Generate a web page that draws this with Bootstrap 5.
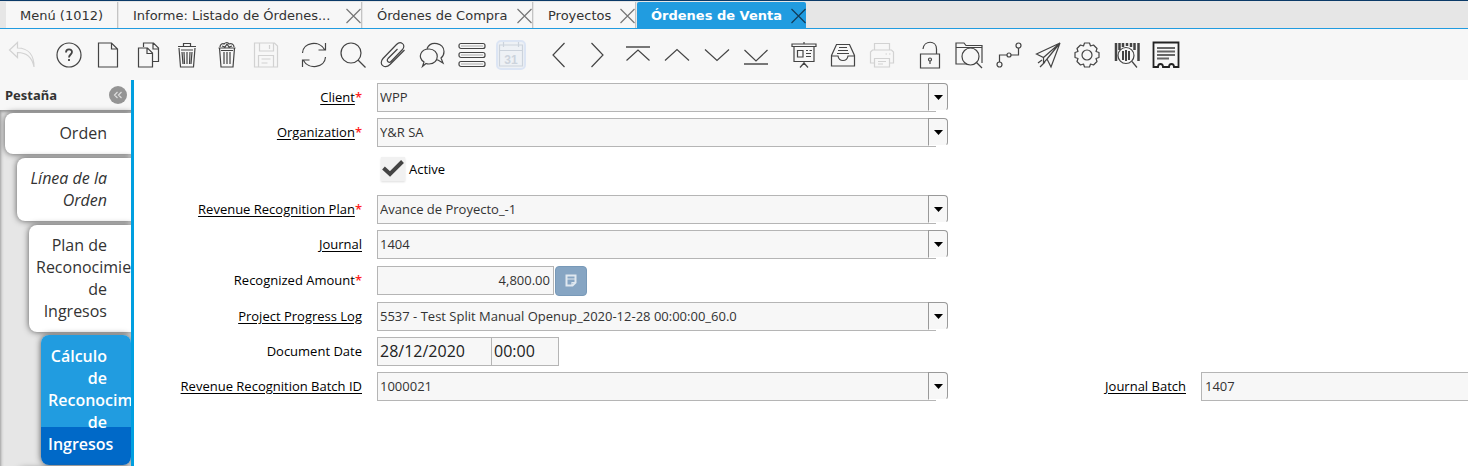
<!DOCTYPE html>
<html lang="es">
<head>
<meta charset="utf-8">
<meta name="viewport" content="width=device-width, initial-scale=1">
<title>Órdenes de Venta</title>
<link href="https://cdn.jsdelivr.net/npm/bootstrap@5.3.0/dist/css/bootstrap.min.css" rel="stylesheet">
<style>
  :root { --brand: #219ce0; --line: #009fe0; --panel: #f7f7f7; --edge: #b5b5b5; }
  body { font: 13px/20px "Open Sans", "Noto Sans", sans-serif; color: #000; background: #fff; }
  .app { border-top: 1px solid #0b3a68; overflow: hidden; }

  /* window tabs */
  .tabstrip { height: 28px; padding-left: 6px; background: #e6e6e6; border-bottom: 1px solid var(--brand); font-family: "DejaVu Sans", sans-serif; }
  .wtab { background: var(--panel); color: #333; padding: 2px 0 0 14px; border-right: 1px solid #c4c4c4; margin-right: 1px; height: 26px; margin-top: 1px; }
  .wtab a { color: inherit; text-decoration: none; white-space: nowrap; }
  .wtab button { color: #777; line-height: 0; }
  .wtab.on { background: var(--brand); color: #fff; font-weight: 700; border: 0; border-radius: 2px 2px 0 0; }
  .wtab.on button { color: #123c58; }
  .w-menu { width: 112px; } .w-inf { width: 243px; } .w-buy { width: 170px; } .w-pro { width: 102px; } .w-sale { width: 169px; }

  /* toolbar */
  .tools { height: 51px; padding-left: 3px; gap: 8px; background: var(--panel); }
  .tools > div { display: flex; flex: none; }
  .tools button { flex: 1 1 0; padding: 0; border: 0; background: none; line-height: 0; color: #444; }
  .tools button:disabled { color: #d2d2d2; }
  .tools svg { stroke-width: 1.2; }
  .g1 { width: 38px; } .g3 { width: 118px; } .g6 { width: 237px; } .g7 { width: 276px; }
  svg { fill: none; stroke: currentColor; stroke-width: 1.2; }

  /* tab tree */
  .side { width: 134px; height: calc(100vh - 80px); flex: none; overflow: hidden; border-right: 3px solid var(--line); background: #e6e6e6; }
  .side-head { height: 30px; padding: 0 4px 0 5px; background: var(--panel); font: bold 13px/20px "Noto Sans", sans-serif; color: #333; }
  .side-head button { width: 18px; height: 18px; border: 0; padding: 0; border-radius: 50%; background: #949494; color: #ddd; line-height: 0; }
  .tree { padding-top: 3px; gap: 4px; box-shadow: inset 1px 2px 3px #999; height: 100%; font-size: 16px; line-height: 22px; text-align: right; }
  .node { flex: none; background: #fff; color: #333; text-decoration: none; border-radius: 8px 0 0 8px; box-shadow: 0 0 6px #555; padding: 9px 24px 10px 7px; }
  .l1 { margin-left: 5px; } .l2 { margin-left: 17px; } .l3 { margin-left: 29px; } .l4 { margin-left: 41px; } 
  .node.now { margin-top: -1px; padding: 10px 24px 10px 7px; color: #fff; font-weight: 600; background: linear-gradient(var(--brand) 92px, #0069c8 92px); border-radius: 8px; }

  /* form */
  .fields { display: grid; flex: 1; min-width: 0; grid-template-columns: 228fr 571fr 223fr 267fr; column-gap: 15px; row-gap: 6px; padding-top: 3px; align-content: start; align-items: center; overflow: hidden; }
  .fields > * { min-width: 0; }
  .cap { grid-column: 1; text-align: right; white-space: nowrap; padding-bottom: 2px; }
  .cap.second { grid-column: 3; }
  .cap a { color: #000; text-decoration: underline; text-underline-offset: 2px; }
  .cap i { color: #f22; font-style: normal; font-weight: 600; }
  .fld { height: 29px; border: 1px solid var(--edge); border-radius: 0; background: var(--panel); color: #333; padding: 0 3px 2px; appearance: none; outline: 0; }
  .combo .fld { flex: 1 1 0; min-width: 0; padding-left: 2px; }
  .drop { width: 20px; height: 28px; margin-left: -8px; background: var(--panel); border: 1px solid #999; border-bottom: 1px solid #fff; border-radius: 0 4px 4px 0; flex: none; line-height: 0; padding: 0; color: #000; }
  .amount { height: 31px; gap: 1px; }
  .amount .fld { width: 177px; }
  .calc { width: 32px; height: 30px; border: 1px solid #7899b8; border-radius: 4px; background: #86a5c3; color: #dfe8f0; padding: 0; line-height: 0; }
  .when .fld { font-size: 16px; color: #222; padding-left: 2px; }
  .day { width: 115px; } .hour { width: 68px; margin-left: -1px; }
  .flag { height: 36px; grid-column: 2; padding: 4px 0 0 4px; }
  .flag input { appearance: none; width: 24px; height: 24px; margin: 0; background: #f1f1f1; box-shadow: 0 1px 2px #ddd; }
  .flag input:checked { background: #f1f1f1 url("data:image/svg+xml,%3Csvg xmlns='http://www.w3.org/2000/svg' viewBox='0 0 24 24'%3E%3Cpath d='M2.5 11l6.500 6L21.500 4.500' fill='none' stroke='%23444' stroke-width='4'/%3E%3C/svg%3E"); }
</style>
</head>
<body>
<div class="app">
  <nav class="tabstrip d-flex">
    <div class="wtab w-menu d-flex align-items-center"><a href="#">Menú (1012)</a></div>
    <div class="wtab w-inf d-flex align-items-center justify-content-between"><a href="#">Informe: Listado de Órdenes...</a><button class="border-0 p-0 bg-transparent" aria-label="Cerrar"><svg width="15" height="16"><path d="M.5 1l14 14M14.500 1L.5 15"/></svg></button></div>
    <div class="wtab w-buy d-flex align-items-center justify-content-between"><a href="#">Órdenes de Compra</a><button class="border-0 p-0 bg-transparent" aria-label="Cerrar"><svg width="15" height="16"><path d="M.5 1l14 14M14.500 1L.5 15"/></svg></button></div>
    <div class="wtab w-pro d-flex align-items-center justify-content-between"><a href="#">Proyectos</a><button class="border-0 p-0 bg-transparent" aria-label="Cerrar"><svg width="15" height="16"><path d="M.5 1l14 14M14.500 1L.5 15"/></svg></button></div>
    <div class="wtab w-sale on d-flex align-items-center justify-content-between"><a href="#">Órdenes de Venta</a><button class="border-0 p-0 bg-transparent" aria-label="Cerrar"><svg width="15" height="16"><path d="M.5 1l14 14M14.500 1L.5 15"/></svg></button></div>
  </nav>

  <div class="tools d-flex align-items-center">
    <div class="g1">
      <button disabled aria-label="Deshacer"><svg width="28" height="28"><path d="M9.500 1.500L1.500 9l8 7.500v-5c8 0 14.500 4 16.500 14.500 0-11-5-19-16.500-19z"/></svg></button>
    </div>
    <div class="g6">
      <button aria-label="Ayuda"><svg width="28" height="28"><circle cx="14" cy="14" r="12"/><path d="M11 11.500c0-4 6-4 6-.5 0 2.500-3 2.500-3 5.500M14 18v2" stroke-width="1.800"/></svg></button>
      <button aria-label="Nuevo"><svg width="28" height="28"><path d="M4.500 2h13l6 6v18h-19zM17.500 2v6h6"/></svg></button>
      <button aria-label="Copiar"><svg width="28" height="28"><path d="M9.500 6V2h10l5 5v13.500h-6M19 2v6h5.500M4.500 7h9l5 5v14h-14zM13 7v5.500h5.500"/></svg></button>
      <button aria-label="Borrar"><svg width="28" height="28"><path d="M5 5.500h18M6 7l1.500 19h13L22 7M10.500 5.500V2.500h7V5.500M8 9h12M11 11l.5 12M14 11v12M17 11l-.5 12M9 11l1 12M19 11l-1 12"/></svg></button>
      <button aria-label="Borrar selección"><svg width="28" height="28"><path d="M6.500 7l1.500 19h12L21.500 7M5.500 7h17M7 6c0-3 3-4 4-3 2-2 4-2 5 0 2-1 5 0 5 3M9 5l3 1 2-3 2 3 3-1M8 9.500h12M11 11v12M14 11v12M17 11v12"/></svg></button>
      <button disabled aria-label="Guardar"><svg width="28" height="28"><path d="M2.500 2h20l3 3v21h-23zM7.500 2v8h14V2M17.500 4v4M6.500 26V14.500h15V26M9.500 18h9M9.500 22h6"/></svg></button>
    </div>
    <div class="g6">
      <button aria-label="Refrescar"><svg width="28" height="28"><path d="M2.500 12C3 1 19.500-1 24.500 8.500M25.500 2v7h-7M25.500 16C25 27 8.500 29 3.500 19.500M2.500 26v-7h7"/></svg></button>
      <button aria-label="Buscar"><svg width="28" height="28"><circle cx="12" cy="12" r="10"/><path d="M19 19l7.500 7.500"/></svg></button>
      <button aria-label="Adjuntos"><svg width="28" height="28"><path d="M18.500 8L9 17.500c-2 2.500 1 5 3 3L23.500 8.500c4-5-2-9-6-5L4 17.500c-5 6 2 11 7 6L25.500 9"/></svg></button>
      <button aria-label="Chat"><svg width="28" height="28"><path d="M9 7.500C13-1 26 2 26 10.500c0 3-1 5-3 6.500l2 5-5-3h-2M4.500 25.500l1.500-4.500c-7-5-3-13 5-13 11 0 11 15 0 15-1 0-2 0-3-.5z"/></svg></button>
      <button aria-label="Lista"><svg width="28" height="28"><rect x="1" y="2.500" width="26" height="5" rx="2"/><rect x="1" y="11.500" width="26" height="5" rx="2"/><rect x="1" y="20.500" width="26" height="5" rx="2"/><path d="M3 5h22M3 14h22M3 23h22" stroke="#aaa"/></svg></button>
      <button disabled aria-label="Calendario"><svg width="30" height="30"><rect x="1" y="1" width="28" height="28" rx="4" fill="#eef1f5" stroke="#dce5f4" stroke-width="2"/><path d="M3.500 5h23v21h-23zM3.500 10.500h23M7.500 2v5M22.500 2v5" stroke="#ccd3dc"/><text x="15" y="24" text-anchor="middle" font-family="Liberation Sans" font-size="12" font-weight="bold" fill="#ccd3dc" stroke="none">31</text></svg></button>
    </div>
    <div class="g6">
      <button aria-label="Anterior"><svg width="28" height="28"><path d="M19.500 2L8 14l11.500 12"/></svg></button>
      <button aria-label="Siguiente"><svg width="28" height="28"><path d="M7.500 2L19 14 7.500 26"/></svg></button>
      <button aria-label="Primero"><svg width="28" height="28"><path d="M2 6h24" stroke-width="2" stroke="#777"/><path d="M2.500 19.500L14 9l11.500 10.500"/></svg></button>
      <button aria-label="Arriba"><svg width="28" height="28"><path d="M2 19.500L14 8.500l12 11"/></svg></button>
      <button aria-label="Abajo"><svg width="28" height="28"><path d="M2 8.500l12 11 12-11"/></svg></button>
      <button aria-label="Último"><svg width="28" height="28"><path d="M2 23h24" stroke-width="2" stroke="#777"/><path d="M2.500 9L14 20 25.500 9"/></svg></button>
    </div>
    <div class="g3">
      <button aria-label="Informe"><svg width="28" height="28"><path d="M2 3h24v2.500H2zM4 6v14.500h20V6M14 1v2M14 20.500V23M10 26.500l4-4.500 4 4.500M7.500 9.500h5.500v6.500H7.500zM16 9.500h2M19.500 9.500H22M16 12.500h5M16 15.500h5"/></svg></button>
      <button aria-label="Archivo"><svg width="28" height="28"><path d="M2.500 14.500l5-11h13l5 11v10.500h-23zM2.500 15H9c1 6 9 6 10 0h6.500M10 6.500h8M9 9.500h10M8 12.500h12"/></svg></button>
      <button disabled aria-label="Imprimir"><svg width="28" height="28"><path d="M6.500 9V2.500h15V9M6.500 22h-4V11l2-2h19l2 2v11h-4M6.500 17.500h15V26h-15zM17.500 13h1.500M21 13h1.500M10 20.500h8M10 23h5"/></svg></button>
    </div>
    <div class="g7">
      <button aria-label="Bloquear"><svg width="28" height="28"><path d="M4.500 13h19v14h-19zM7 8C8-1 20.500-1 20.500 8v5"/><circle cx="14" cy="18.500" r="1.500"/><path d="M14 20v3"/></svg></button>
      <button aria-label="Zoom"><svg width="30" height="28"><path d="M13 23H2V2h8l2 2.500h16V22M2 6.500h26"/><circle cx="16.500" cy="15.500" r="8.500"/><path d="M22 21l6 6"/></svg></button>
      <button aria-label="Flujo de trabajo"><svg width="28" height="28"><circle cx="4.500" cy="23.500" r="2.500"/><circle cx="14" cy="14" r="2"/><circle cx="23.500" cy="4.500" r="2.500"/><path d="M4.500 21v-7H12M16 14h7.500V7"/></svg></button>
      <button aria-label="Enviar"><svg width="28" height="28"><path d="M26 2L2.500 13l7 3.500zM26 2L9.500 16.500v5.500l3.500-4 4 8zM26 2L13 18M4 22l4-3M6 26l5-5"/></svg></button>
      <button aria-label="Proceso"><svg width="28" height="28"><circle cx="14" cy="14" r="5"/><path d="M11.500 2h5l1 3 3-1 3.500 3.500-1 3 3 1v5l-3 1 1 3-3.500 3.500-3-1-1 3h-5l-1-3-3 1L4 20.500l1-3-3-1v-5l3-1-1-3L7.500 4l3 1z" stroke-linejoin="round"/></svg></button>
      <button aria-label="Producto"><svg width="28" height="28"><path d="M3 2v18M6.500 2v7M10 2v4M14 2v3M18 2v4M21.500 2v7M25.500 2v18" stroke-width="2.500"/><circle cx="13" cy="14.500" r="8"/><path d="M19 20.500l5 6"/><path d="M10 10v9M13 9v11M16 10v9" stroke-width="2"/></svg></button>
      <button aria-label="Recibo"><svg width="28" height="28"><path d="M1.500 1.500h25V26H22c0-4-5-4-5 0h-6c0-4-5-4-5 0H1.500z" stroke="#222" stroke-width="1.800"/><path d="M5 7h18M5 10.500h18M5 14h18M5 17.500h12" stroke="#666" stroke-width="2"/></svg></button>
    </div>
  </div>

  <div class="d-flex">
    <aside class="side">
      <div class="side-head d-flex align-items-center justify-content-between">Pestaña
        <button aria-label="Contraer"><svg width="10" height="8"><path d="M4.500 1l-3 3 3 3M8.500 1l-3 3 3 3"/></svg></button>
      </div>
      <nav class="tree d-flex flex-column">
        <a class="node l1" href="#">Orden</a>
        <a class="node l2 fst-italic" href="#">Línea de la Orden</a>
        <a class="node l3" href="#">Plan de Reconocimiento de Ingresos</a>
        <a class="node l4 now" href="#">Cálculo de Reconocimiento de Ingresos</a>
        <a class="node l2" href="#" aria-label="Siguiente pestaña"></a>
      </nav>
    </aside>

    <form class="fields">
      <label class="cap" for="client"><a href="#">Client</a><i>*</i></label>
      <div class="combo d-flex"><select class="fld" id="client"><option>WPP</option></select><button type="button" class="drop" aria-label="Abrir"><svg width="9" height="5"><path d="M0 0h9L4.500 5z" fill="#000" stroke="none"/></svg></button></div>

      <label class="cap" for="org"><a href="#">Organization</a><i>*</i></label>
      <div class="combo d-flex"><select class="fld" id="org"><option>Y&amp;R SA</option></select><button type="button" class="drop" aria-label="Abrir"><svg width="9" height="5"><path d="M0 0h9L4.500 5z" fill="#000" stroke="none"/></svg></button></div>

      <div class="flag d-flex align-items-start"><label class="d-flex align-items-center gap-1"><input type="checkbox" checked>Active</label></div>

      <label class="cap" for="plan"><a href="#">Revenue Recognition Plan</a><i>*</i></label>
      <div class="combo d-flex"><select class="fld" id="plan"><option>Avance de Proyecto_-1</option></select><button type="button" class="drop" aria-label="Abrir"><svg width="9" height="5"><path d="M0 0h9L4.500 5z" fill="#000" stroke="none"/></svg></button></div>

      <label class="cap" for="journal"><a href="#">Journal</a></label>
      <div class="combo d-flex"><select class="fld" id="journal"><option>1404</option></select><button type="button" class="drop" aria-label="Abrir"><svg width="9" height="5"><path d="M0 0h9L4.500 5z" fill="#000" stroke="none"/></svg></button></div>

      <label class="cap" for="amount">Recognized Amount<i>*</i></label>
      <div class="amount d-flex align-items-center"><input class="fld text-end" id="amount" value="4,800.00"><button type="button" class="calc" aria-label="Calculadora"><svg width="12" height="13"><path d="M1.500 1.500h9v7l-3 3h-6z" stroke-width="2"/><path d="M1 5h10M7 12V8.500h4"/></svg></button></div>

      <label class="cap" for="log"><a href="#">Project Progress Log</a></label>
      <div class="combo d-flex"><select class="fld" id="log"><option>5537 - Test Split Manual Openup_2020-12-28 00:00:00_60.0</option></select><button type="button" class="drop" aria-label="Abrir"><svg width="9" height="5"><path d="M0 0h9L4.500 5z" fill="#000" stroke="none"/></svg></button></div>

      <label class="cap" for="day">Document Date</label>
      <div class="when d-flex"><input class="fld day" id="day" value="28/12/2020"><input class="fld hour" aria-label="Hora" value="00:00"></div>

      <label class="cap" for="batch"><a href="#">Revenue Recognition Batch ID</a></label>
      <div class="combo d-flex"><select class="fld" id="batch"><option>1000021</option></select><button type="button" class="drop" aria-label="Abrir"><svg width="9" height="5"><path d="M0 0h9L4.500 5z" fill="#000" stroke="none"/></svg></button></div>
      <label class="cap second" for="jbatch"><a href="#">Journal Batch</a></label>
      <select class="fld border-end-0" id="jbatch"><option>1407</option></select>
    </form>
  </div>
</div>
<script src="https://cdn.jsdelivr.net/npm/bootstrap@5.3.0/dist/js/bootstrap.bundle.min.js"></script>
</body>
</html>
